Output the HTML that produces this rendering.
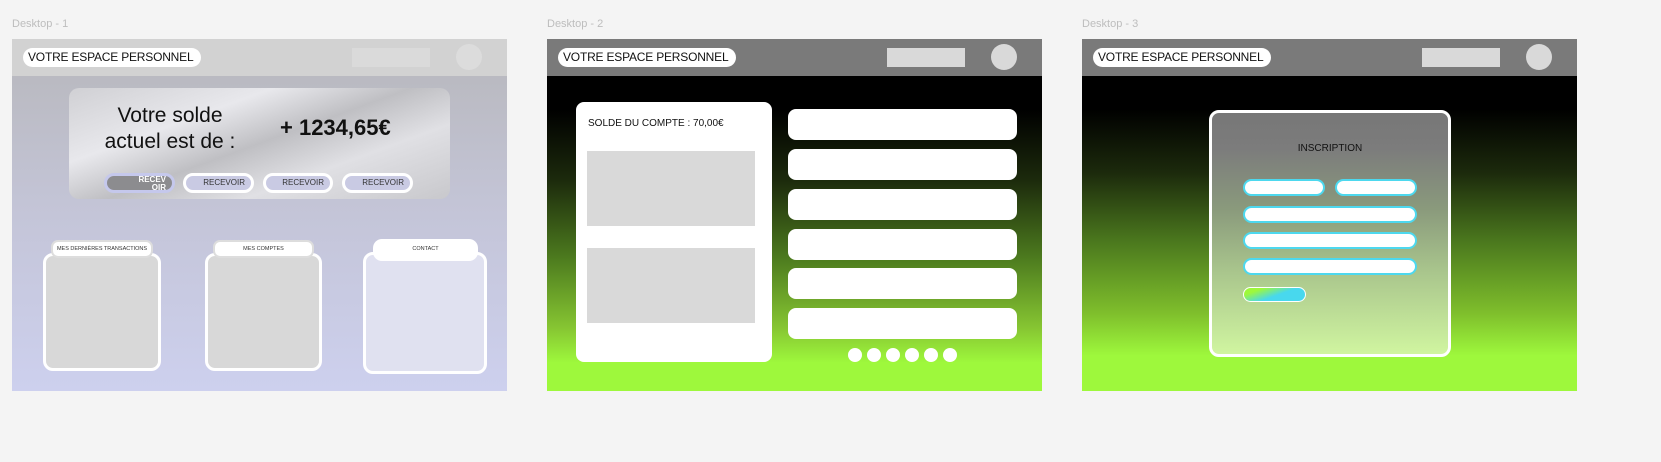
<!DOCTYPE html>
<html><head><meta charset="utf-8"><style>
*{box-sizing:border-box;margin:0;padding:0}
body{width:1661px;height:462px;background:#f4f4f4;position:relative;overflow:hidden;font-family:"Liberation Sans",sans-serif}
.a{position:absolute}
.lbl{font-size:11px;color:#bdbdbd}
.frame{top:39px;width:495px;height:352px;overflow:hidden}
.hdr{left:0;top:0;width:495px;height:37px}
.pill{top:9px;height:19px;background:#fff;border-radius:10px;font-size:12px;letter-spacing:-0.2px;color:#111;line-height:19px;padding-left:5px;white-space:nowrap;overflow:hidden}
.rect{top:9px;width:78px;height:19px;background:#d9d9d9}
.circ{width:26px;height:26px;border-radius:50%;background:#d9d9d9;top:5px;left:444px}
.btn{height:20px;border:3px solid #fff;border-radius:10px;background:#c9cae3;font-size:8px;line-height:14px;text-align:right;padding-right:6px;color:#333;top:134px}
.card{border:3px solid #fff;border-radius:10px;background:#d8d8d8}
.tab{height:18px;background:#fff;border-radius:7px;font-size:5.5px;text-align:center;line-height:15px;color:#333;border:2px solid #ddd;white-space:nowrap;overflow:hidden}
.li{left:241px;width:229px;height:31px;background:#fff;border-radius:8px}
.dot{top:309px;width:14px;height:14px;border-radius:50%;background:#fff}
.inp{height:17px;background:#fff;border:2px solid #4dd8ee;border-radius:9px}
</style></head><body>
<div class="a lbl" style="left:12px;top:18px">Desktop - 1</div>
<div class="a lbl" style="left:547px;top:18px">Desktop - 2</div>
<div class="a lbl" style="left:1082px;top:18px">Desktop - 3</div>

<!-- Frame 1 -->
<div class="a frame" style="left:12px;background:linear-gradient(#b7b7bb,#c4c5d8 50%,#cdd0ee)">
 <div class="a hdr" style="background:#d2d2d2"></div>
 <div class="a pill" style="left:11px;width:178px">VOTRE ESPACE PERSONNEL</div>
 <div class="a rect" style="left:340px;background:#dadada"></div>
 <div class="a circ" style="background:#dcdcdc"></div>
 <div class="a" style="left:57px;top:49px;width:381px;height:111px;border-radius:10px;background:linear-gradient(160deg,#d0d0d4,#e8e8ec 30%,#bfbfc3 50%,#e0e0e4 70%,#c8c8cc)"></div>
 <div class="a" style="left:82px;top:64px;width:152px;font-size:21px;line-height:26px;text-align:center;color:#111">Votre solde actuel est de :</div>
 <div class="a" style="left:268px;top:76px;font-size:22px;font-weight:bold;color:#111">+ 1234,65€</div>
 <div class="a btn" style="left:92px;width:71px;background:#8c8c8f;border-color:#c5c8ec;color:#fff;line-height:8px;font-size:8px;font-weight:bold;padding-top:0">RECEV<br>OIR</div>
 <div class="a btn" style="left:171px;width:71px">RECEVOIR</div>
 <div class="a btn" style="left:251px;width:70px">RECEVOIR</div>
 <div class="a btn" style="left:330px;width:71px">RECEVOIR</div>
 <div class="a card" style="left:31px;top:214px;width:118px;height:118px"></div>
 <div class="a tab" style="left:39px;top:201px;width:102px">MES DERNIÈRES TRANSACTIONS</div>
 <div class="a card" style="left:193px;top:214px;width:117px;height:118px"></div>
 <div class="a tab" style="left:201px;top:201px;width:101px">MES COMPTES</div>
 <div class="a card" style="left:351px;top:213px;width:124px;height:122px;background:#e0e1f0"></div>
 <div class="a tab" style="left:361px;top:200px;width:105px;height:22px;border:none;border-radius:9px;line-height:20px">CONTACT</div>
</div>

<!-- Frame 2 -->
<div class="a frame" style="left:547px;background:linear-gradient(#000 0%,#000 20%,#1c2a0c 40%,#4c7a1e 62%,#86c532 82%,#9ef83c 92%)">
 <div class="a hdr" style="background:#7a7a7a"></div>
 <div class="a pill" style="left:11px;width:178px">VOTRE ESPACE PERSONNEL</div>
 <div class="a rect" style="left:340px"></div>
 <div class="a circ"></div>
 <div class="a" style="left:29px;top:63px;width:196px;height:260px;background:#fff;border-radius:8px"></div>
 <div class="a" style="left:41px;top:79px;font-size:10px;color:#111">SOLDE DU COMPTE : 70,00€</div>
 <div class="a" style="left:40px;top:112px;width:168px;height:75px;background:#d9d9d9"></div>
 <div class="a" style="left:40px;top:209px;width:168px;height:75px;background:#d9d9d9"></div>
 <div class="a li" style="top:70px"></div>
 <div class="a li" style="top:110px"></div>
 <div class="a li" style="top:150px"></div>
 <div class="a li" style="top:190px"></div>
 <div class="a li" style="top:229px"></div>
 <div class="a li" style="top:269px"></div>
 <div class="a dot" style="left:301px"></div>
 <div class="a dot" style="left:320px"></div>
 <div class="a dot" style="left:339px"></div>
 <div class="a dot" style="left:358px"></div>
 <div class="a dot" style="left:377px"></div>
 <div class="a dot" style="left:396px"></div>
</div>

<!-- Frame 3 -->
<div class="a frame" style="left:1082px;background:linear-gradient(#000 0%,#000 20%,#1c2a0c 38%,#4c7a1e 58%,#7fbf2c 78%,#9ef83c 90%)">
 <div class="a hdr" style="background:#7a7a7a"></div>
 <div class="a pill" style="left:11px;width:178px">VOTRE ESPACE PERSONNEL</div>
 <div class="a rect" style="left:340px"></div>
 <div class="a circ"></div>
 <div class="a" style="left:127px;top:71px;width:242px;height:247px;border:3px solid #fff;border-radius:10px;background:linear-gradient(#777 0%,#7c7c7c 15%,#8a9a7c 40%,#a8c48c 65%,#d0f5a0 100%)"></div>
 <div class="a" style="left:127px;top:104px;width:242px;text-align:center;font-size:10px;color:#111">INSCRIPTION</div>
 <div class="a inp" style="left:161px;top:140px;width:82px"></div>
 <div class="a inp" style="left:253px;top:140px;width:82px"></div>
 <div class="a inp" style="left:161px;top:167px;width:174px"></div>
 <div class="a inp" style="left:161px;top:193px;width:174px"></div>
 <div class="a inp" style="left:161px;top:219px;width:174px"></div>
 <div class="a" style="left:161px;top:248px;width:63px;height:15px;border:1.5px solid #fff;border-radius:8px;background:linear-gradient(160deg,#9ef83c 20%,#48d8ee 55%)"></div>
</div>
</body></html>
